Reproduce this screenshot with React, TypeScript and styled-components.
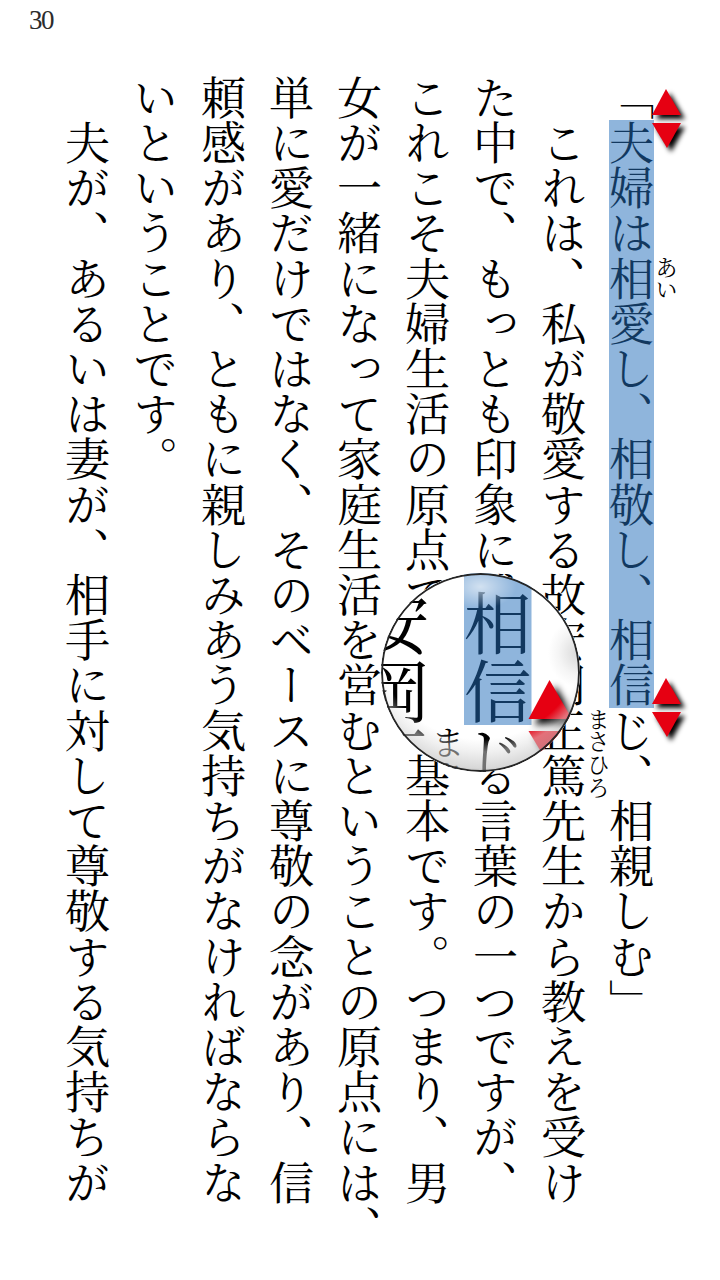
import React from "react";
import styled, { createGlobalStyle } from "styled-components";

const Global = createGlobalStyle`
  html, body { margin: 0; padding: 0; background: #fff; }
`;

const Screen = styled.div`
  position: relative;
  width: 720px;
  height: 1280px;
  overflow: hidden;
  background: #fff;
`;

const PageSheet = styled.div`
  position: relative;
  width: 720px;
  height: 1280px;
  background: #fff;
  color: #000;
`;

const PageNumber = styled.div`
  position: absolute;
  left: 29px;
  top: 5px;
  font: 27px/30px "Liberation Serif", serif;
  letter-spacing: -1.6px;
  color: #2c2c2c;
`;

const Columns = styled.div`
  display: flex;
  flex-direction: row-reverse;
  padding: 75px 55px 0 0;
`;

const Column = styled.div`
  flex: 0 0 68px;
  width: 68px;
  height: 1160px;
  writing-mode: vertical-rl;
  white-space: nowrap;
  line-height: 68px;
  font-family: "Noto Serif CJK JP", "Noto Sans CJK JP", serif;
  font-size: 45.2px;
  font-weight: 400;
  text-spacing-trim: space-all;
  font-kerning: none;
`;

const Annotated = styled.span`
  position: relative;
`;

const Furigana = styled.span`
  position: absolute;
  top: 0;
  left: calc(50% + 24px);
  width: 22px;
  line-height: 22px;
  font-size: 22.6px;
`;

const Selection = styled.div`
  position: absolute;
  left: 609px;
  top: 120px;
  width: 45px;
  height: 588px;
  background: rgba(35, 110, 186, 0.51);
`;

const HandleIcon = styled.svg<{ $top: number }>`
  position: absolute;
  left: 648px;
  top: ${(p) => p.$top}px;
  width: 44px;
  height: 76px;
  overflow: visible;
`;

const Lens = styled.div`
  position: absolute;
  left: 381px;
  top: 573px;
  width: 199px;
  height: 199px;
  border-radius: 50%;
  overflow: hidden;
  background: #fff;
`;

const LensContent = styled.div`
  position: absolute;
  left: 0;
  top: 0;
  width: 720px;
  height: 1280px;
  transform-origin: 0 0;
  transform: translate(-830.5px, -910px) scale(1.5);
`;

const LensGloss = styled.div`
  position: absolute;
  inset: 0;
  border-radius: 50%;
  border: 2px solid #262626;
  box-sizing: border-box;
  background:
    radial-gradient(ellipse 36px 22px at 50% 6%, rgba(255, 255, 255, 0.6), transparent),
    radial-gradient(ellipse 30px 34px at 100% 40%, rgba(185, 185, 185, 0.55), rgba(215, 215, 215, 0.25) 65%, transparent),
    radial-gradient(circle 160px at 50% 30%, transparent 66%, rgba(225, 225, 225, 0.5) 74%, rgba(190, 190, 190, 0.6) 84%, rgba(130, 130, 130, 0.85) 92%);
`;

const Handles = ({ top }: { top: number }) => (
  <HandleIcon $top={top} viewBox="0 0 44 76">
    <defs>
      <filter id="handle-blur" x="-40%" y="-40%" width="180%" height="180%">
        <feGaussianBlur stdDeviation="2.4" />
      </filter>
    </defs>
    <g filter="url(#handle-blur)" transform="translate(4 4)">
      <polygon points="18,5 4,31 33,31" fill="#000" />
      <polygon points="4,39 33,39 19,64" fill="#000" />
    </g>
    <polygon points="18,5 4,31 33,31" fill="#e60012" />
    <polygon points="4,39 33,39 19,64" fill="#e60012" />
  </HandleIcon>
);

const Page = () => (
  <PageSheet>
    <PageNumber>30</PageNumber>
    <Columns>
      <Column>
        {"「夫婦は"}
        <Annotated>
          {"相"}
          <Furigana>あい</Furigana>
        </Annotated>
        {"愛し、相敬し、相信じ、相親しむ」"}
      </Column>
      <Column>
        {"\u3000これは、私が敬愛する故安岡"}
        <Annotated>
          {"正篤"}
          <Furigana>まさひろ</Furigana>
        </Annotated>
        {"先生から教えを受け"}
      </Column>
      <Column>た中で、もっとも印象に残っている言葉の一つですが、</Column>
      <Column>これこそ夫婦生活の原点であり、基本です。つまり、男</Column>
      <Column>女が一緒になって家庭生活を営むということの原点には、</Column>
      <Column>単に愛だけではなく、そのベースに尊敬の念があり、信</Column>
      <Column>頼感があり、ともに親しみあう気持ちがなければならな</Column>
      <Column>いということです。</Column>
      <Column>{"\u3000夫が、あるいは妻が、相手に対して尊敬する気持ちが"}</Column>
    </Columns>
    <Selection />
    <Handles top={84} />
    <Handles top={673} />
  </PageSheet>
);

export default function App() {
  return (
    <Screen>
      <Global />
      <Page />
      <Lens>
        <LensContent>
          <Page />
        </LensContent>
        <LensGloss />
      </Lens>
    </Screen>
  );
}
